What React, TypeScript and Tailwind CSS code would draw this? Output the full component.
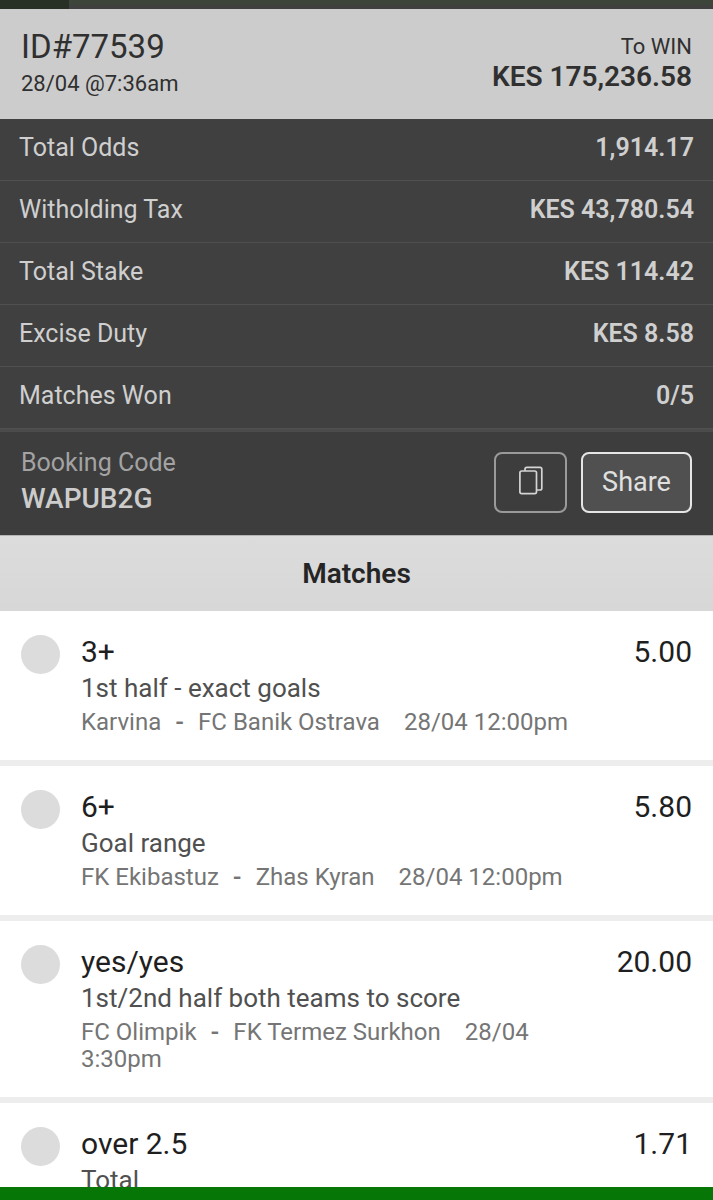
import React from "react";

const summary = [
  { label: "Total Odds", value: "1,914.17" },
  { label: "Witholding Tax", value: "KES 43,780.54" },
  { label: "Total Stake", value: "KES 114.42" },
  { label: "Excise Duty", value: "KES 8.58" },
  { label: "Matches Won", value: "0/5" },
];

const matches = [
  { pick: "3+", market: "1st half - exact goals", home: "Karvina", away: "FC Banik Ostrava", time: "28/04 12:00pm", odds: "5.00" },
  { pick: "6+", market: "Goal range", home: "FK Ekibastuz", away: "Zhas Kyran", time: "28/04 12:00pm", odds: "5.80" },
  { pick: "yes/yes", market: "1st/2nd half both teams to score", home: "FC Olimpik", away: "FK Termez Surkhon", time: "28/04 3:30pm", odds: "20.00" },
  { pick: "over 2.5", market: "Total", home: "", away: "", time: "", odds: "1.71" },
];

const CopyIcon = () => (
  <svg width="24" height="30" viewBox="0 0 24 30" fill="none" stroke="#d4d4d4" strokeWidth="1.7" aria-hidden="true">
    <rect x="0.9" y="5" width="16.6" height="22.600" rx="1.8" />
    <path d="M6 5V3.200a1.800 1.800 0 0 1 1.800-1.800h13.200a1.800 1.800 0 0 1 1.800 1.800V22.200a1.800 1.800 0 0 1-1.800 1.800h-3.500" />
  </svg>
);

const MatchRow = ({ match }: { match: (typeof matches)[number] }) => (
  <li className="flex items-start border-b-6 border-[#ededed] bg-white px-[21px] pt-[22px] pb-6">
    <span className="mt-0.5 mr-[21px] size-[39px] shrink-0 rounded-full bg-[#dcdcdc]" />
    <div className="min-w-0 flex-1">
      <h3 className="text-[30px] leading-[38px] text-[#1f1f1f]">{match.pick}</h3>
      <p className="text-[26px] leading-[34px] text-[#505050]">{match.market}</p>
      {match.home && (
        <p className="mt-1 text-[24px] leading-[27px] text-[#757575]">
          {match.home}
          <b className="mx-3.5 font-semibold">-</b>
          {match.away}
          <time className="ml-6">{match.time}</time>
        </p>
      )}
    </div>
    <span className="w-[92px] shrink-0 text-right text-[30px] leading-[38px] text-[#1f1f1f]">{match.odds}</span>
  </li>
);

export default function App() {
  return (
    <div className="flex h-screen flex-col overflow-hidden bg-white font-['Roboto',sans-serif]">
      <div className="flex h-[9px] shrink-0 border-b-4 border-[#404040] bg-[#3d443a]">
        <div className="-mb-1 w-[69px] bg-[#283026]" />
      </div>

      <header className="flex shrink-0 justify-between bg-[#cccccc] px-[21px] pt-[18px] pb-[18px] text-[#303030]">
        <div>
          <h1 className="text-[33px] leading-10">ID#77539</h1>
          <p className="text-[22px] leading-[34px]">28/04 @7:36am</p>
        </div>
        <div className="pt-1 text-right">
          <p className="text-[22px] leading-8">To WIN</p>
          <p className="text-[28px] leading-[28px] font-semibold">KES 175,236.58</p>
        </div>
      </header>

      <dl className="shrink-0 border-b-3 border-[#4b4b4b] bg-[#404040] text-[25px] text-[#cfcfcf]">
        {summary.map((row) => (
          <div key={row.label} className="flex justify-between border-b border-[#505050] px-[19px] pt-3 pb-[15px] leading-[34px]">
            <dt>{row.label}</dt>
            <dd className="font-semibold">{row.value}</dd>
          </div>
        ))}
      </dl>

      <section className="flex shrink-0 items-start justify-between bg-[#3d3d3d] px-[21px] pt-3.5 pb-[17px]">
        <div>
          <p className="text-[25px] leading-[34px] text-[#a3a3a3]">Booking Code</p>
          <p className="text-[28px] leading-[38px] font-medium text-[#cccccc]">WAPUB2G</p>
        </div>
        <div className="mt-1.5 flex gap-3.5">
          <button aria-label="Copy booking code" className="flex h-[61px] w-[73px] items-center justify-center rounded-lg border-2 border-[#9a9a9a] pb-1">
            <CopyIcon />
          </button>
          <button className="h-[61px] w-[111px] rounded-lg border-2 border-[#e6e6e6] bg-[#505050] text-[27px] text-[#e0e0e0]">Share</button>
        </div>
      </section>

      <h2 className="shrink-0 border-t border-[#b5b5b5] bg-linear-to-b from-[#dcdcdc] to-[#d7d7d7] text-center text-[28px] leading-[75px] font-semibold text-[#252525]">
        Matches
      </h2>

      <ul className="min-h-0 flex-1 overflow-hidden">
        {matches.map((match) => (
          <MatchRow key={match.pick} match={match} />
        ))}
      </ul>

      <footer className="h-[13px] shrink-0 bg-[#067706]" />
    </div>
  );
}
